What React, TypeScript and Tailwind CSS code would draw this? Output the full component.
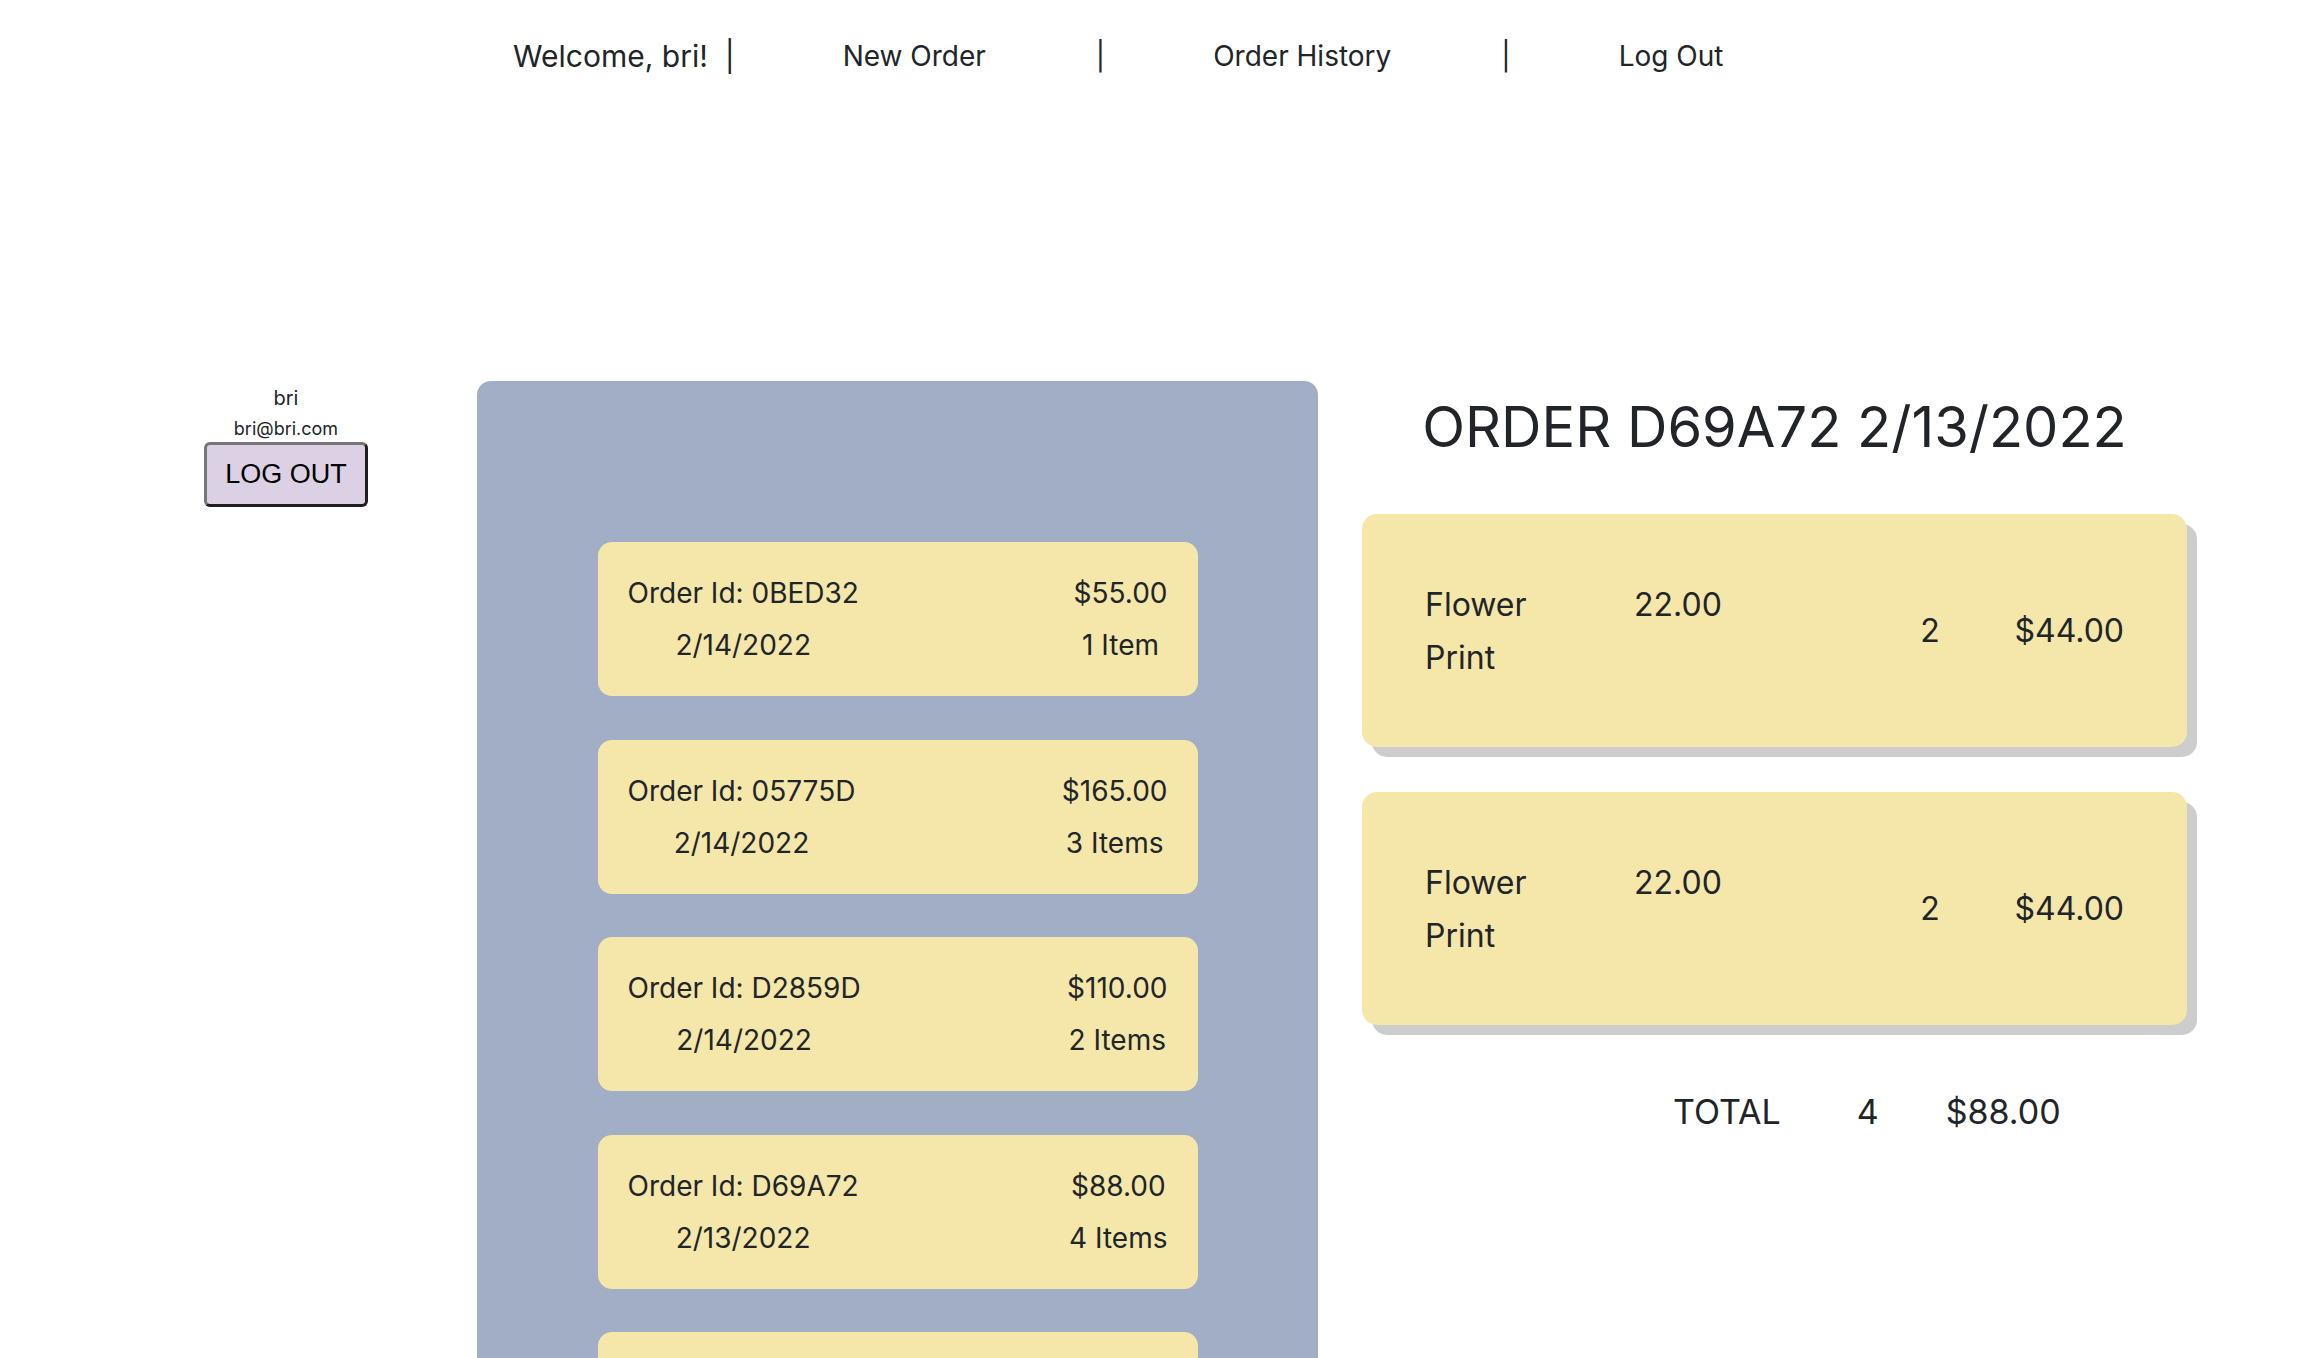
import React from "react";

type Order = {
  id: string;
  date: string;
  total: string;
  items: number;
};

type LineItem = {
  name: string;
  price: string;
  qty: number;
  total: string;
};

const orders: Order[] = [
  { id: "0BED32", date: "2/14/2022", total: "$55.00", items: 1 },
  { id: "05775D", date: "2/14/2022", total: "$165.00", items: 3 },
  { id: "D2859D", date: "2/14/2022", total: "$110.00", items: 2 },
  { id: "D69A72", date: "2/13/2022", total: "$88.00", items: 4 },
  { id: "A41C07", date: "2/12/2022", total: "$22.00", items: 1 },
];

const lineItems: LineItem[] = [
  { name: "Flower Print", price: "22.00", qty: 2, total: "$44.00" },
  { name: "Flower Print", price: "22.00", qty: 2, total: "$44.00" },
];

const font = { fontFamily: "Inter, 'Noto Sans', sans-serif" };

function NavBar() {
  return (
    <nav className="h-[112px] flex items-center pl-[513px] text-[28px] text-[#212529]">
      <span className="whitespace-pre text-[30px]">Welcome, bri!  |</span>
      <a className="ml-[108px]">New Order</a>
      <span className="ml-[110px]">|</span>
      <a className="ml-[108px]">Order History</a>
      <span className="ml-[110px]">|</span>
      <a className="ml-[108px]">Log Out</a>
    </nav>
  );
}

function UserBox() {
  return (
    <aside className="w-[477px] shrink-0 pl-[204px] pt-[3px]">
      <div className="w-[164px] flex flex-col items-center text-[#212529]">
        <div className="text-[20px] leading-[28px]">bri</div>
        <div className="text-[18px] leading-[22px] mt-[6px]">bri@bri.com</div>
        <button
          className="mt-[2px] w-[164px] h-[65px] bg-[#dcd0e4] rounded-[6px] border-[3px] border-t-[#767676] border-l-[#767676] border-r-[#1f1f1f] border-b-[#1f1f1f] text-[27px] text-black"
          style={{ fontFamily: "'Liberation Sans', Arial, sans-serif" }}
        >
          LOG OUT
        </button>
      </div>
    </aside>
  );
}

function OrderCard({ id, date, total, items }: Order) {
  return (
    <div className="w-[600px] h-[154px] bg-[#f5e7a9] rounded-[14px] px-[30px] py-[25px] flex justify-between text-[28px] leading-[52px] text-[#212529]">
      <div className="text-center">
        <p>Order Id: {id}</p>
        <p>{date}</p>
      </div>
      <div className="text-center">
        <p>{total}</p>
        <p>
          {items} {items === 1 ? "Item" : "Items"}
        </p>
      </div>
    </div>
  );
}

function ItemCard({ name, price, qty, total }: LineItem) {
  return (
    <div className="w-[825px] h-[233px] bg-[#f5e7a9] rounded-[15px] shadow-[10px_10px_0_#cdcdcd] px-[63px] flex items-center text-[32px] leading-[53px] text-[#212529]">
      <div className="w-[140px]">{name}</div>
      <div className="ml-[69px] w-[246px] h-[106px]">{price}</div>
      <div className="w-[100px] text-center">{qty}</div>
      <div className="ml-auto">{total}</div>
    </div>
  );
}

export default function App() {
  return (
    <div className="min-h-screen bg-white" style={font}>
      <NavBar />
      <main className="mt-[269px] flex items-start">
        <UserBox />
        <section className="w-[841px] shrink-0 bg-[#a2aec6] rounded-t-[14px] pt-[161px] pb-[60px] flex flex-col items-center gap-[43.5px]">
          {orders.map((o) => (
            <OrderCard key={o.id} {...o} />
          ))}
        </section>
        <section className="ml-[44px] w-[825px] shrink-0">
          <h1 className="mt-[16px] text-center text-[56px] leading-[60px] text-[#212529]">
            ORDER D69A72 2/13/2022
          </h1>
          <div className="mt-[57px] flex flex-col gap-[45px]">
            {lineItems.map((item, i) => (
              <ItemCard key={i} {...item} />
            ))}
          </div>
          <div className="mt-[65px] flex items-center pl-[311px] text-[34px] leading-[44px] text-[#212529]">
            <span>TOTAL</span>
            <span className="ml-[76px]">4</span>
            <span className="ml-[67px]">$88.00</span>
          </div>
        </section>
      </main>
    </div>
  );
}
